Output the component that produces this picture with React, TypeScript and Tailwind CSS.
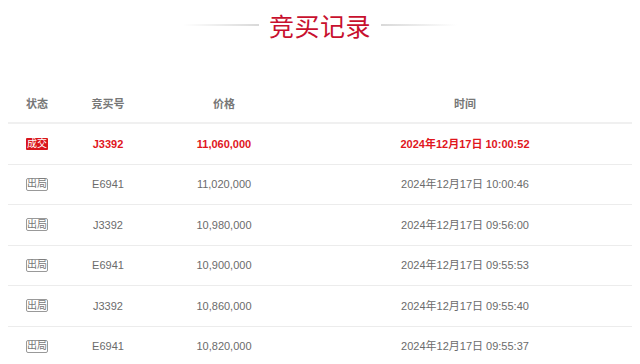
import React from "react";

type Row = { status: "win" | "out"; no: string; price: string; time: string };

const rows: Row[] = [
  { status: "win", no: "J3392", price: "11,060,000", time: "2024年12月17日 10:00:52" },
  { status: "out", no: "E6941", price: "11,020,000", time: "2024年12月17日 10:00:46" },
  { status: "out", no: "J3392", price: "10,980,000", time: "2024年12月17日 09:56:00" },
  { status: "out", no: "E6941", price: "10,900,000", time: "2024年12月17日 09:55:53" },
  { status: "out", no: "J3392", price: "10,860,000", time: "2024年12月17日 09:55:40" },
  { status: "out", no: "E6941", price: "10,820,000", time: "2024年12月17日 09:55:37" },
];

const font = { fontFamily: '"Liberation Sans", Arial, "Noto Sans CJK SC", sans-serif' };

export default function App() {
  return (
    <div className="w-[640px] h-[364px] overflow-hidden bg-white" style={font}>
      <div className="flex items-center justify-center h-[52px] gap-[10px] pb-[2px]">
        <div className="w-[76px] h-[2px] bg-gradient-to-r from-transparent to-[#d9d9d9]" />
        <div
          className="text-[25px] leading-none text-[#c8102e] tracking-[0.5px]"
          style={{ fontFamily: '"Noto Sans CJK SC", sans-serif' }}
        >
          竞买记录
        </div>
        <div className="w-[76px] h-[2px] bg-gradient-to-r from-[#d9d9d9] to-transparent" />
      </div>
      <div className="mx-[8px] w-[624px] mt-[35px]">
        <div className="grid grid-cols-[58px_84px_148px_334px] h-[37px] items-center border-b-2 border-[#f0f0f0] text-[11px] font-bold text-[#777]">
          <div className="text-center">状态</div>
          <div className="text-center">竞买号</div>
          <div className="text-center">价格</div>
          <div className="text-center">时间</div>
        </div>
        {rows.map((r, i) => {
          const win = r.status === "win";
          return (
            <div
              key={i}
              className={`grid grid-cols-[58px_84px_148px_334px] h-[40.5px] items-center border-b border-[#ececec] text-[11px] ${
                win ? "font-bold text-[#e0161d]" : "text-[#6b6b6b]"
              }`}
            >
              <div className="flex justify-center">
                {win ? (
                  <span className="inline-flex items-center justify-center w-[22px] h-[12px] bg-[#d9161c] text-white text-[10px] leading-none font-normal rounded-[1px]">
                    成交
                  </span>
                ) : (
                  <span className="inline-flex items-center justify-center w-[22px] h-[13px] border border-[#999] text-[#777] text-[10px] leading-none font-normal rounded-[2px]">
                    出局
                  </span>
                )}
              </div>
              <div className="text-center">{r.no}</div>
              <div className="text-center">{r.price}</div>
              <div className="text-center">{r.time}</div>
            </div>
          );
        })}
      </div>
    </div>
  );
}
